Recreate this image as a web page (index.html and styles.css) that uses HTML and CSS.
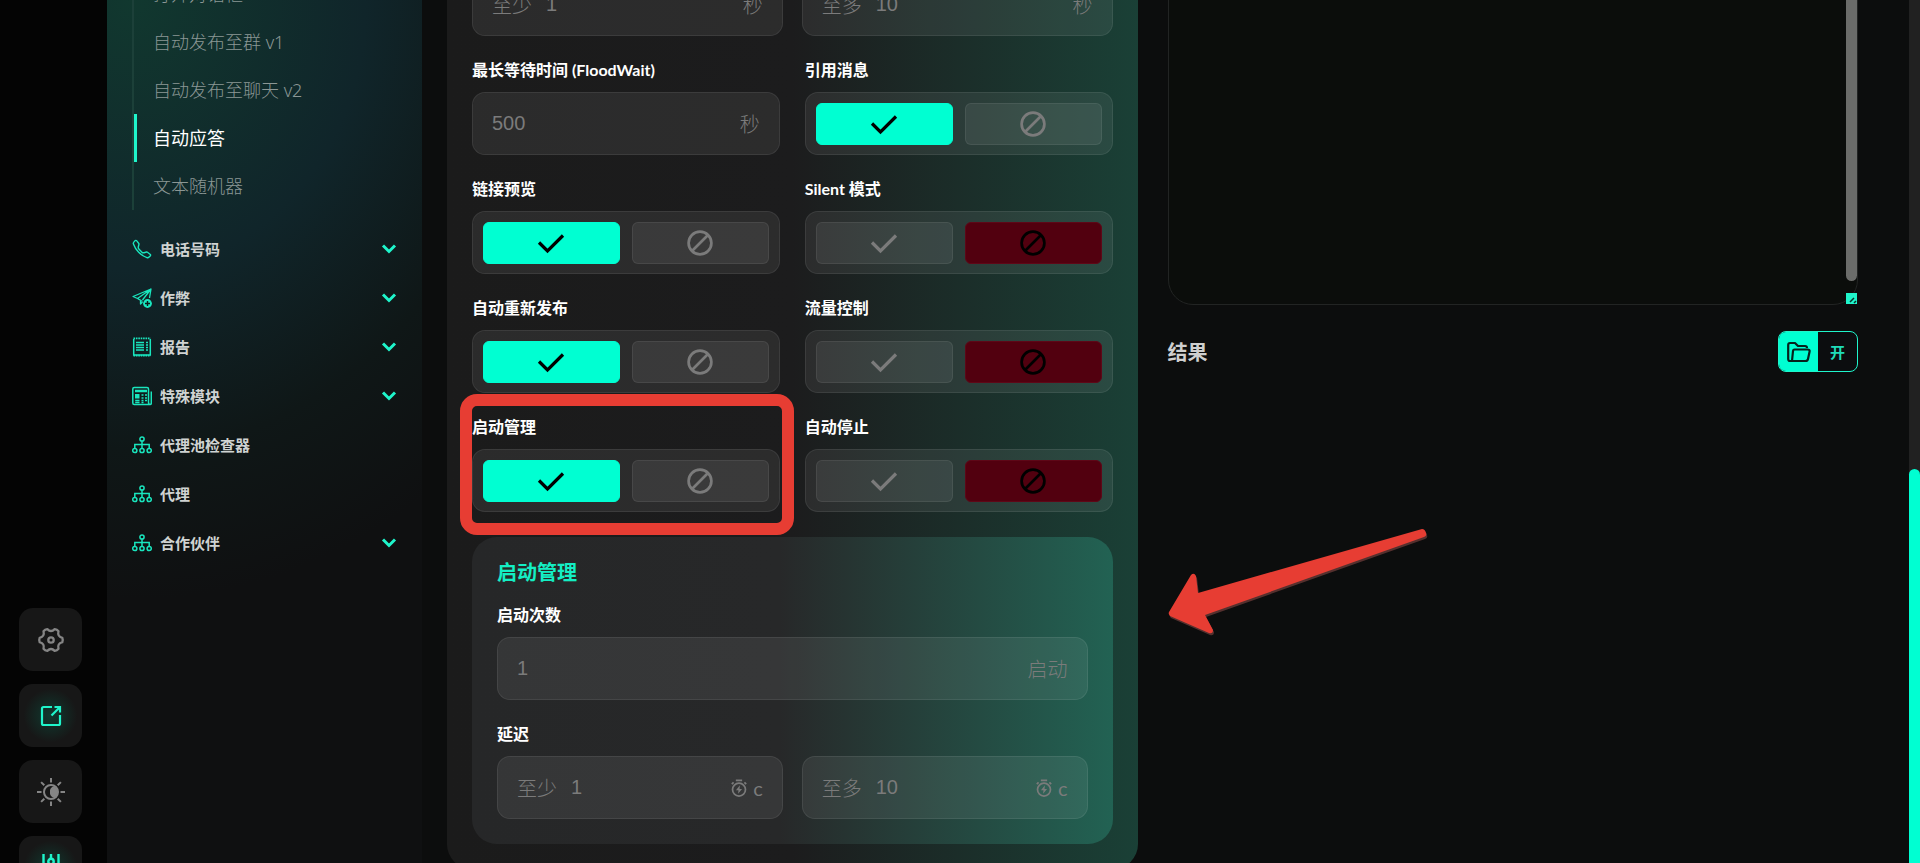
FILE: index.html
```html
<!DOCTYPE html>
<html lang="zh-CN">
<head>
    <meta charset="UTF-8">
    <meta name="viewport" content="width=device-width, initial-scale=1.0">
    <title>自动应答</title>
    <link rel="stylesheet" href="styles.css">
</head>
<body>
    <!-- shared icons -->
    <svg class="sprite" aria-hidden="true">
        <symbol id="i-check" viewBox="0 0 28 28"><path d="M2 13.500l8.500 8.500L26 6.500" fill="none" stroke="currentColor" stroke-width="3.200"/></symbol>
        <symbol id="i-ban" viewBox="0 0 28 28"><g fill="none" stroke="currentColor" stroke-width="2.700"><circle cx="14" cy="14" r="11.400"/><path d="M6 22L22 6"/></g></symbol>
        <symbol id="i-chevron" viewBox="0 0 16 16"><path d="M2 4.500l6 6 6-6" fill="none" stroke="currentColor" stroke-width="3"/></symbol>
        <symbol id="i-net" viewBox="0 0 20 20"><g fill="none" stroke="currentColor" stroke-width="1.500"><circle cx="10" cy="4" r="2.100"/><circle cx="2.800" cy="15.500" r="2.100"/><circle cx="10" cy="15.500" r="2.100"/><circle cx="17.200" cy="15.500" r="2.100"/><path d="M10 6v7.400M2.800 13.400V9.500h14.400v3.900"/></g></symbol>
        <symbol id="i-timer" viewBox="0 0 20 20"><g fill="none" stroke="currentColor" stroke-width="1.900"><circle cx="10" cy="11.800" r="7.200"/><path d="M6.500 1.500h7M2 5.800l2-2M18 5.800l-2-2"/></g><path d="M11 7L6.600 12.500h2.800L9 16.500l4.400-5.500h-2.800z" fill="currentColor"/></symbol>
    </svg>

    <div class="app">
        <aside class="rail">
            <button class="rail-btn" aria-label="设置">
                <svg viewBox="-13 -13 26 26"><g fill="none" stroke="currentColor" stroke-width="2.300" stroke-linejoin="round"><path d="M11.300 2.200Q6.100 3.600 7.500 8.700Q6 10.600 3.700 10.900Q0 7.100-3.700 10.900Q-6 10.600-7.500 8.700Q-6.100 3.600-11.300 2.200Q-12.200 0-11.300-2.200Q-6.100-3.600-7.500-8.700Q-6-10.600-3.700-10.900Q0-7.100 3.700-10.900Q6-10.600 7.500-8.700Q6.100-3.600 11.300-2.200Q12.200 0 11.300 2.200z"/><circle r="2.700"/></g></svg>
            </button>
            <button class="rail-btn rail-on" aria-label="打开">
                <svg viewBox="0 0 26 26"><g fill="none" stroke="currentColor" stroke-width="2.200"><path d="M14 4H5.500Q4 4 4 5.500V20.500Q4 22 5.500 22H20.500Q22 22 22 20.500V12"/><path d="M13.500 12.500L21.500 4.500M16.500 4H22V9.500"/></g></svg>
            </button>
            <button class="rail-btn" aria-label="主题">
                <svg class="sun" viewBox="-14 -14 28 28"><g fill="none" stroke="currentColor" stroke-width="2"><circle r="7"/><path d="M0-14v4.500M0 14V9.500M-14 0h4.500M14 0H9.500M-9.900-9.900l3.200 3.200M9.900 9.900L6.700 6.700M-9.900 9.900l3.200-3.200M9.900-9.900L6.700-6.700"/></g><path d="M3-5.800A6.500 6.500 0 0 1 3 5.800A5 5 0 0 1-1 0A5 5 0 0 1 3-5.800z" fill="currentColor"/></svg>
            </button>
            <button class="rail-btn rail-on" aria-label="筛选">
                <svg viewBox="0 0 26 26"><g fill="none" stroke="currentColor" stroke-width="2.400"><path d="M5.500-1v14M5.500 18v6M13-1v4.500M13 9.500V24M20.500-1v12M20.500 16v8"/><circle cx="5.500" cy="15.500" r="2.500"/><circle cx="13" cy="6.500" r="2.700"/><circle cx="20.500" cy="13.500" r="2.500"/></g></svg>
            </button>
        </aside>

        <nav class="sidebar">
            <ul class="submenu">
                <li><a href="#">打开对话框</a></li>
                <li><a href="#">自动发布至群 v1</a></li>
                <li><a href="#">自动发布至聊天 v2</a></li>
                <li class="active"><a href="#">自动应答</a></li>
                <li><a href="#">文本随机器</a></li>
            </ul>
            <ul class="menu">
                <li><a href="#">
                    <svg class="menu-icon" viewBox="0 0 16 16"><path fill="none" stroke="currentColor" stroke-width="1.100" d="M3.654 1.328a.678.678 0 0 0-1.015-.063L1.605 2.300c-.483.484-.661 1.169-.45 1.770a17.568 17.568 0 0 0 4.168 6.608 17.569 17.569 0 0 0 6.608 4.168c.601.211 1.286.033 1.770-.45l1.034-1.034a.678.678 0 0 0-.063-1.015l-2.307-1.794a.678.678 0 0 0-.58-.122l-2.190.547a1.745 1.745 0 0 1-1.657-.459L5.482 8.062a1.745 1.745 0 0 1-.46-1.657l.548-2.190a.678.678 0 0 0-.122-.58z"/></svg>
                    <span>电话号码</span><svg class="chevron"><use href="#i-chevron"/></svg></a></li>
                <li><a href="#">
                    <svg class="menu-icon" viewBox="0 0 20 20"><path fill="none" stroke="currentColor" stroke-width="1.300" stroke-linejoin="round" d="M8.500 11.500v4.500l2-2M5.500 10.500L1 8.500 19 1l-1.500 9M19 1L5.500 10.500l5 3M19 1l-8.500 11"/><circle cx="15.500" cy="15.500" r="4.400" fill="currentColor"/><path d="M15.500 13v5M13 15.500h5" stroke="#0c1a19" stroke-width="1.400"/></svg>
                    <span>作弊</span><svg class="chevron"><use href="#i-chevron"/></svg></a></li>
                <li><a href="#">
                    <svg class="menu-icon" viewBox="0 0 20 20"><g fill="none" stroke="currentColor"><path stroke-width="1.500" d="M1.700 2v16h16.600V2"/><path stroke-width="1.800" stroke-dasharray="1.600 .8" d="M1.500 1.400h17M1.500 18.600h17"/><path stroke-width="1.400" d="M4 5.500h8M4 8h8M4 10.500h8M4 13h8M14 5.500h2M14 8h2M14 10.500h2M14 13h2"/></g></svg>
                    <span>报告</span><svg class="chevron"><use href="#i-chevron"/></svg></a></li>
                <li><a href="#">
                    <svg class="menu-icon" viewBox="0 0 20 20"><g fill="none" stroke="currentColor" stroke-width="1.500"><path d="M16.500 16V3Q16.500 1.500 15 1.500H2.200Q.8 1.500.8 3V17Q.8 18.500 2.200 18.500H18Q19.300 18.500 19.300 17V5.500M16.500 16Q16.500 18.500 18 18.500"/><path stroke-width="1.300" d="M9.500 9h2M13 9h2M9.500 12h2M13 12h2M3.200 14.500h4.300M9.500 14.500h2M13 14.500h2M3.200 16.500h4.300M9.500 16.500h2"/></g><path fill="currentColor" d="M3 3.800h12v2.400H3zM3 8h4.500v4.500H3z"/></svg>
                    <span>特殊模块</span><svg class="chevron"><use href="#i-chevron"/></svg></a></li>
                <li><a href="#"><svg class="menu-icon"><use href="#i-net"/></svg><span>代理池检查器</span></a></li>
                <li><a href="#"><svg class="menu-icon"><use href="#i-net"/></svg><span>代理</span></a></li>
                <li><a href="#"><svg class="menu-icon"><use href="#i-net"/></svg><span>合作伙伴</span><svg class="chevron"><use href="#i-chevron"/></svg></a></li>
            </ul>
        </nav>

        <main class="main">
            <section class="panel">
                <div class="group">
                    <div class="label">延迟</div>
                    <div class="pair">
                        <label class="field"><span>至少</span><input type="text" placeholder="1"><span>秒</span></label>
                        <label class="field"><span>至多</span><input type="text" placeholder="10"><span>秒</span></label>
                    </div>
                </div>

                <div class="options">
                    <div class="group">
                        <label class="label" for="flood">最长等待时间 (FloodWait)</label>
                        <div class="field"><input id="flood" type="text" placeholder="500"><span>秒</span></div>
                    </div>
                    <div class="group">
                        <div class="label">引用消息</div>
                        <div class="toggle">
                            <button class="yes" aria-label="启用"><svg><use href="#i-check"/></svg></button>
                            <button aria-label="禁用"><svg><use href="#i-ban"/></svg></button>
                        </div>
                    </div>
                    <div class="group">
                        <div class="label">链接预览</div>
                        <div class="toggle">
                            <button class="yes" aria-label="启用"><svg><use href="#i-check"/></svg></button>
                            <button aria-label="禁用"><svg><use href="#i-ban"/></svg></button>
                        </div>
                    </div>
                    <div class="group">
                        <div class="label">Silent 模式</div>
                        <div class="toggle">
                            <button aria-label="启用"><svg><use href="#i-check"/></svg></button>
                            <button class="no" aria-label="禁用"><svg><use href="#i-ban"/></svg></button>
                        </div>
                    </div>
                    <div class="group">
                        <div class="label">自动重新发布</div>
                        <div class="toggle">
                            <button class="yes" aria-label="启用"><svg><use href="#i-check"/></svg></button>
                            <button aria-label="禁用"><svg><use href="#i-ban"/></svg></button>
                        </div>
                    </div>
                    <div class="group">
                        <div class="label">流量控制</div>
                        <div class="toggle">
                            <button aria-label="启用"><svg><use href="#i-check"/></svg></button>
                            <button class="no" aria-label="禁用"><svg><use href="#i-ban"/></svg></button>
                        </div>
                    </div>
                    <div class="group marked">
                        <div class="label">启动管理</div>
                        <div class="toggle">
                            <button class="yes" aria-label="启用"><svg><use href="#i-check"/></svg></button>
                            <button aria-label="禁用"><svg><use href="#i-ban"/></svg></button>
                        </div>
                    </div>
                    <div class="group">
                        <div class="label">自动停止</div>
                        <div class="toggle">
                            <button aria-label="启用"><svg><use href="#i-check"/></svg></button>
                            <button class="no" aria-label="禁用"><svg><use href="#i-ban"/></svg></button>
                        </div>
                    </div>
                </div>

                <div class="card">
                    <h2>启动管理</h2>
                    <div class="group">
                        <label class="label" for="starts">启动次数</label>
                        <div class="field"><input id="starts" type="text" placeholder="1"><span>启动</span></div>
                    </div>
                    <div class="group">
                        <div class="label">延迟</div>
                        <div class="pair">
                            <label class="field"><span>至少</span><input type="text" placeholder="1"><span class="unit"><svg><use href="#i-timer"/></svg>c</span></label>
                            <label class="field"><span>至多</span><input type="text" placeholder="10"><span class="unit"><svg><use href="#i-timer"/></svg>c</span></label>
                        </div>
                    </div>
                </div>
            </section>

            <section class="output">
                <div class="log">
                    <textarea aria-label="日志"></textarea>
                    <div class="log-thumb"></div>
                    <svg class="log-grip" viewBox="0 0 11 11"><path d="M4 9l4-4M8 10l2-2" stroke="#06322a" stroke-width="1.500"/></svg>
                </div>
                <div class="result-head">
                    <h2>结果</h2>
                    <button class="open-btn">
                        <span class="open-icon"><svg viewBox="0 0 24 22"><g fill="none" stroke="currentColor" stroke-width="2.200" stroke-linejoin="round"><path d="M5 20H3Q1.200 20 1.200 18V4Q1.200 2 3 2H8L11 5H18Q20 5 20 7"/><path d="M7.500 8.500H20.500Q23 8.500 22.600 10.500L21 18Q20.600 20 18.500 20H5L6 10Q6.200 8.500 7.500 8.500z"/></g></svg></span>
                        <span class="open-text">开</span>
                    </button>
                </div>
                <svg class="arrow" viewBox="0 0 262 112"><path d="M1 88L23 51Q26 48 28 52L30 69 254 5Q257 5 258 9 259 12 256 13L37 91 45 106Q45 110 41 109L2 92Q0 90 1 88z"/></svg>
            </section>
        </main>

        <div class="scrollbar"><div class="scroll-thumb"></div></div>
    </div>
</body>
</html>
```

FILE: styles.css
```css
* {
    box-sizing: border-box;
}
body {
    margin: 0;
    background-color: #0c0d0d;
    color: #fff;
    font-family: Lato, "Noto Sans CJK SC", sans-serif;
}
button,
input,
textarea {
    font: inherit;
    color: inherit;
}
button {
    padding: 0;
    cursor: pointer;
}
ul {
    list-style: none;
    margin: 0;
    padding: 0;
}
a {
    color: inherit;
    text-decoration: none;
}
.sprite {
    display: none;
}
.app {
    display: grid;
    grid-template-columns: 107px 315px 1fr 11px;
    grid-template-rows: 100vh;
    height: 100vh;
    overflow: hidden;
}

/* left rail */
.rail {
    display: flex;
    flex-direction: column;
    justify-content: flex-end;
    align-items: center;
    gap: 13px;
    margin-bottom: -36px;
    padding-right: 6px;
    background-color: #040404;
}
.rail-btn {
    display: grid;
    place-items: center;
    width: 63px;
    height: 63px;
    border: 0;
    border-radius: 14px;
    background-color: #171717;
    color: #858585;
}
.rail-btn svg {
    width: 26px;
    height: 26px;
    overflow: visible;
}
.rail-btn .sun {
    width: 28px;
    height: 28px;
}
.rail-on {
    background: radial-gradient(circle, #10392f 0, #171717 60%);
    color: #1ff5cb;
}

/* sidebar */
.sidebar {
    padding: 0 25px;
    background: radial-gradient(ellipse 520px 600px at 8% 0, #11382f 0, #10252a 45%, #0f1717 75%, #0f1011 100%) #0f1011;
}
.submenu {
    margin-top: -30px;
    margin-bottom: 14px;
    border-left: 2px solid #1c4039;
    font-family: "Noto Sans", "Noto Sans CJK SC", sans-serif;
    font-size: 18px;
    font-weight: 300;
    line-height: 48px;
    color: #8b9795;
}
.submenu li {
    padding-left: 19px;
}
.submenu .active {
    padding-left: 16px;
    border-left: 3px solid #1ff5cb;
    color: #fff;
    font-weight: 400;
}
.menu a {
    display: flex;
    align-items: center;
    gap: 8px;
    height: 49px;
    font-size: 15px;
    font-weight: 700;
    color: #cfd3d2;
}
.menu-icon {
    width: 20px;
    height: 20px;
    color: #19e6be;
}
.chevron {
    width: 16px;
    height: 16px;
    margin-left: auto;
    color: #1ff5cb;
}

/* settings panel */
.main {
    display: grid;
    grid-template-columns: 1fr 1fr;
    gap: 30px;
    align-items: start;
    padding: 0 51px 0 25px;
}
.panel {
    margin-top: -86px;
    padding: 25px;
    border-radius: 25px;
    background: linear-gradient(90deg, #1b1b1b 0, #1c1c1d 50%, #1a4036 100%);
}
.label {
    display: block;
    margin-bottom: 10px;
    font-size: 16px;
    font-weight: 700;
    line-height: 24px;
}
.pair {
    display: grid;
    grid-template-columns: 1fr 1fr;
    gap: 19px;
}
.options {
    display: grid;
    grid-template-columns: 1fr 1fr;
    gap: 22px 25px;
    margin: 22px 0 25px;
}
.field,
.toggle {
    display: flex;
    align-items: center;
    gap: 14px;
    height: 63px;
    border: 1px solid rgba(255, 255, 255, 0.07);
    border-radius: 13px;
    background-color: rgba(255, 255, 255, 0.07);
    background-clip: padding-box;
    border-color: rgba(255, 255, 255, 0.14);
}
.field {
    padding: 0 19px;
    font-family: "Liberation Sans", "Noto Sans CJK SC", sans-serif;
    font-size: 20px;
    font-weight: 300;
    color: #7b7b7b;
}
.field span {
    white-space: nowrap;
}
.field input {
    flex: 1;
    width: 100%;
    min-width: 0;
    padding: 0;
    border: 0;
    outline: 0;
    background: none;
}
.field input::placeholder {
    color: inherit;
}
.field .unit {
    display: flex;
    align-items: center;
    gap: 5px;
    font-family: Lato, sans-serif;
    font-weight: 400;
}
.unit svg {
    width: 18px;
    height: 18px;
}
.toggle {
    gap: 12px;
    padding: 0 10px;
}
.toggle button {
    flex: 1;
    display: grid;
    place-items: center;
    height: 42px;
    border: 1px solid rgba(255, 255, 255, 0.07);
    border-radius: 6px;
    background-color: rgba(255, 255, 255, 0.07);
    color: #7b7b7b;
}
.toggle svg {
    width: 28px;
    height: 28px;
}
.toggle .yes {
    border-color: #00ffd2;
    background-color: #00ffd2;
    color: #000;
}
.toggle .no {
    border-color: #5e0717;
    background-color: #52000f;
    color: #000;
}
.marked {
    position: relative;
}
.marked::after {
    content: "";
    position: absolute;
    inset: -21px -14px -23px -12px;
    border: 12px solid #e73d33;
    border-radius: 17px;
    pointer-events: none;
}
.card {
    padding: 20px 25px 25px;
    border-radius: 25px;
    background: linear-gradient(90deg, #262728 0, #272829 48%, #226253 100%);
}
.card h2 {
    margin: 0 0 16px;
    font-size: 20px;
    line-height: 30px;
    color: #14eec4;
}
.card .group + .group {
    margin-top: 22px;
}

/* log and result */
.output {
    position: relative;
}
.log {
    position: relative;
    margin-top: -86px;
}
.log textarea {
    display: block;
    width: 100%;
    height: 391px;
    border: 1px solid #222423;
    border-radius: 25px;
    outline: 0;
    background-color: #0b0d0b;
    resize: none;
}
.log-thumb {
    position: absolute;
    top: 0;
    right: 1px;
    bottom: 24px;
    width: 11px;
    border-radius: 6px;
    background-color: #6b6c6a;
}
.log-grip {
    position: absolute;
    right: 1px;
    bottom: 1px;
    width: 11px;
    height: 11px;
    background-color: #1ff5cb;
}
.result-head {
    display: flex;
    align-items: center;
    justify-content: space-between;
    margin-top: 26px;
}
.result-head h2 {
    margin: 0;
    font-size: 20px;
    line-height: 30px;
    color: #cfcfcf;
}
.open-btn {
    display: flex;
    width: 80px;
    height: 41px;
    overflow: hidden;
    border: 1px solid #1ff5cb;
    border-radius: 8px;
    background-color: #0c0d0f;
    color: #1fdcb8;
    font-size: 15px;
    font-weight: 700;
}
.open-btn span {
    flex: 1;
    display: grid;
    place-items: center;
    height: 100%;
}
.open-btn .open-icon {
    background-color: #00ffd2;
    color: #06211c;
}
.open-icon svg {
    width: 24px;
    height: 22px;
}
.arrow {
    position: absolute;
    top: 524px;
    left: 0;
    width: 262px;
    height: 112px;
    fill: #e73d33;
    filter: drop-shadow(1px 2px 0 #55302e);
}

/* page scrollbar */
.scrollbar {
    display: flex;
    align-items: flex-end;
    background-color: #212121;
}
.scroll-thumb {
    width: 100%;
    height: 394px;
    border-radius: 6px 6px 0 0;
    background-color: #00ffd2;
}
```
